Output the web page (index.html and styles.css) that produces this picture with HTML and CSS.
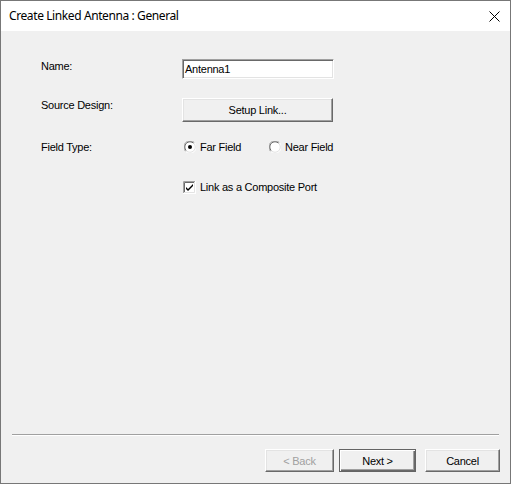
FILE: index.html
```html
<!DOCTYPE html>
<html>
<head>
<meta charset="utf-8">
<link rel="stylesheet" href="styles.css">
</head>
<body>
<div class="window">
  <div class="titlebar">
    <span class="title">Create Linked Antenna : General</span>
    <svg class="close" width="11" height="11" viewBox="0 0 11 11"><path d="M0.5 0.5 L10.5 10.5 M10.5 0.5 L0.5 10.5" stroke="#000" stroke-width="1" fill="none"/></svg>
  </div>
  <div class="content">
    <div class="form">
      <div class="row row-name">
        <span class="label">Name:</span>
        <div class="textbox">Antenna1</div>
      </div>
      <div class="row row-source">
        <span class="label">Source Design:</span>
        <div class="btn btn-wide">Setup Link...</div>
      </div>
      <div class="row row-field">
        <span class="label">Field Type:</span>
        <div class="radios">
          <div class="opt opt-far">
            <svg class="radio" width="12" height="12" viewBox="0 0 12 12">
              <circle cx="6" cy="6" r="5.5" fill="#fff"/>
              <path d="M1.6 10.4 A5.5 5.5 0 0 1 10.4 1.6" stroke="#a0a0a0" fill="none"/>
              <path d="M10.4 1.6 A5.5 5.5 0 0 1 1.6 10.4" stroke="#fff" fill="none"/>
              <path d="M2.3 9.7 A4.5 4.5 0 0 1 9.7 2.3" stroke="#696969" fill="none"/>
              <path d="M9.7 2.3 A4.5 4.5 0 0 1 2.3 9.7" stroke="#e3e3e3" fill="none"/>
              <circle cx="6" cy="6" r="2" fill="#000"/>
            </svg>
            <span>Far Field</span>
          </div>
          <div class="opt">
            <svg class="radio" width="12" height="12" viewBox="0 0 12 12">
              <circle cx="6" cy="6" r="5.5" fill="#fff"/>
              <path d="M1.6 10.4 A5.5 5.5 0 0 1 10.4 1.6" stroke="#a0a0a0" fill="none"/>
              <path d="M10.4 1.6 A5.5 5.5 0 0 1 1.6 10.4" stroke="#fff" fill="none"/>
              <path d="M2.3 9.7 A4.5 4.5 0 0 1 9.7 2.3" stroke="#696969" fill="none"/>
              <path d="M9.7 2.3 A4.5 4.5 0 0 1 2.3 9.7" stroke="#e3e3e3" fill="none"/>
            </svg>
            <span>Near Field</span>
          </div>
        </div>
      </div>
      <div class="row row-check">
        <span class="label"></span>
        <div class="opt">
          <svg class="check" width="13" height="13" viewBox="0 0 13 13">
            <rect x="0" y="0" width="13" height="13" fill="#fff"/>
            <path d="M0.5 13 V0.5 H13" stroke="#a0a0a0" fill="none"/>
            <path d="M1.5 12 V1.5 H12" stroke="#696969" fill="none"/>
            <path d="M0 12.5 H12.5 V0" stroke="#fff" fill="none"/>
            <path d="M1 11.5 H11.5 V1" stroke="#e3e3e3" fill="none"/>
            <path d="M3 6 L5 8 L10 3 V5 L5 10 L3 8 Z" fill="#000"/>
          </svg>
          <span>Link as a Composite Port</span>
        </div>
      </div>
    </div>
    <div class="separator"></div>
    <div class="buttons">
      <div class="btn btn-back disabled">&lt; Back</div>
      <div class="btn btn-next default">Next &gt;</div>
      <div class="btn btn-cancel">Cancel</div>
    </div>
  </div>
</div>
</body>
</html>
```

FILE: styles.css
```css
html, body {
  margin: 0;
  padding: 0;
}
body {
  font-family: "Liberation Sans", Arial, sans-serif;
  font-size: 11px;
  letter-spacing: -0.25px;
  color: #000;
}
.window {
  width: 511px;
  height: 484px;
  box-sizing: border-box;
  border: 1px solid #777777;
  display: flex;
  flex-direction: column;
  background: #f0f0f0;
}
.titlebar {
  height: 30px;
  background: #fff;
  display: flex;
  align-items: center;
  justify-content: space-between;
  padding: 0 10px 0 8px;
  flex: none;
}
.title {
  font-family: "Noto Sans", "Open Sans", sans-serif;
  font-size: 12px;
  letter-spacing: -0.4px;
  color: #000;
  position: relative;
  top: -1px;
}
.close {
  display: block;
}
.content {
  flex: 1;
  display: flex;
  flex-direction: column;
}
.form {
  flex: 1;
  padding-top: 28px;
  padding-left: 40px;
  display: flex;
  flex-direction: column;
}
.row {
  display: flex;
  align-items: flex-start;
}
.label {
  width: 141px;
  flex: none;
  line-height: 13px;
}
.row-name {
  height: 20px;
  margin-bottom: 19px;
}
.row-name .label {
  padding-top: 1px;
}
.row-source {
  height: 24px;
  margin-bottom: 18px;
}
.row-source .label {
  padding-top: 1px;
}
.row-field {
  height: 14px;
  align-items: center;
  margin-bottom: 26px;
}
.row-check {
  height: 14px;
  align-items: center;
}
.textbox {
  width: 152px;
  height: 20px;
  box-sizing: border-box;
  background: #fff;
  border-top: 1px solid #a0a0a0;
  border-left: 1px solid #a0a0a0;
  border-bottom: 1px solid #fff;
  border-right: 1px solid #fff;
  box-shadow: inset 1px 1px 0 #696969, inset -1px -1px 0 #e3e3e3;
  padding: 0 2px;
  line-height: 18px;
}
.btn {
  box-sizing: border-box;
  background: #f0f0f0;
  border-top: 1px solid #fff;
  border-left: 1px solid #fff;
  border-bottom: 1px solid #696969;
  border-right: 1px solid #696969;
  box-shadow: inset -1px -1px 0 #a0a0a0, inset 1px 1px 0 #e3e3e3;
  display: flex;
  align-items: center;
  justify-content: center;
}
.btn-wide {
  width: 151px;
  height: 24px;
}
.radios {
  display: flex;
  align-items: center;
}
.opt {
  display: flex;
  align-items: center;
}
.opt-far {
  width: 85px;
}
.radio {
  display: block;
  margin-left: 2px;
  margin-right: 4px;
}
.check {
  display: block;
  margin-left: 1px;
  margin-right: 4px;
}
.opt span {
  line-height: 13px;
}
.separator {
  margin: 0 11px 0 11px;
  border-top: 1px solid #a0a0a0;
  border-bottom: 1px solid #fff;
  flex: none;
}
.buttons {
  display: flex;
  justify-content: flex-end;
  padding: 13px 10px 11px 0;
  flex: none;
}
.buttons .btn {
  height: 23px;
}
.btn-back {
  width: 69px;
  margin-right: 5px;
}
.btn-next {
  width: 77px;
  margin-right: 9px;
}
.btn-cancel {
  width: 75px;
}
.disabled {
  color: #a0a0a0;
}
.default {
  border: 1px solid #646464;
  box-shadow: inset 1px 1px 0 #fff, inset -1px -1px 0 #696969, inset -2px -2px 0 #a0a0a0;
}
```
